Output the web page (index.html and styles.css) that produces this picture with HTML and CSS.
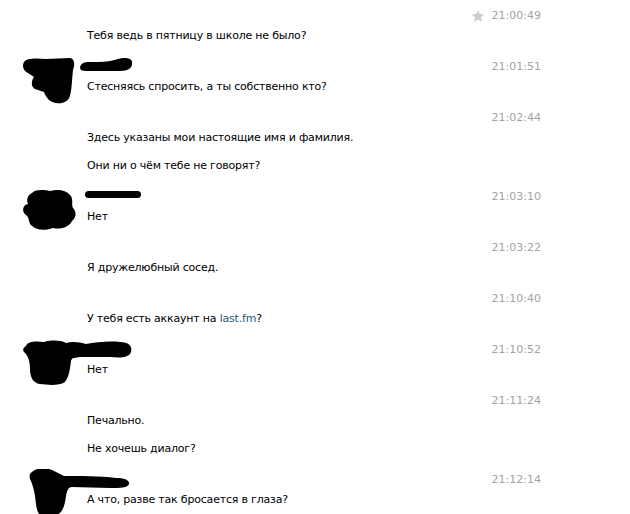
FILE: index.html
```html
<!DOCTYPE html>
<html lang="ru">
<head>
    <meta charset="UTF-8">
    <title>Диалог</title>
    <link rel="stylesheet" href="styles.css">
</head>
<body>
    <div class="dialog">
        <div class="msg">
            <div class="ava"></div>
            <div class="body">
                <div class="head"><span class="author"></span><span class="time"><svg class="star" width="14" height="14" viewBox="0 0 24 24"><path d="M12 1.5l3.2 7.1 7.6.7-5.8 5.1 1.8 7.6L12 18l-6.8 4 1.8-7.6L1.2 9.3l7.6-.7z"/></svg>21:00:49</span></div>
                <p>Тебя ведь в пятницу в школе не было?</p>
            </div>
        </div>

        <div class="msg">
            <svg class="censor" width="130" height="50" viewBox="0 0 130 50">
                <path d="M4 6 C6 2 16 2 26 3 L50 2 C55 3 55 9 53 14 C52 22 52 32 50 40 C48 46 42 48 36 47 C30 46 26 42 24 36 L15 33 C11 31 11 25 14 21 L8 17 C3 15 2 9 4 6 Z"/>
                <path d="M61 9 C63 5 70 6 78 6 C86 6 92 5 98 3 C104 1 112 2 112 6 C113 12 108 15 100 15 L66 15 C60 15 59 12 61 9 Z"/>
            </svg>
            <div class="ava"></div>
            <div class="body">
                <div class="head"><span class="author"></span><span class="time">21:01:51</span></div>
                <p>Стесняясь спросить, а ты собственно кто?</p>
            </div>
        </div>

        <div class="msg">
            <div class="ava"></div>
            <div class="body">
                <div class="head"><span class="author"></span><span class="time">21:02:44</span></div>
                <p>Здесь указаны мои настоящие имя и фамилия.</p>
                <p>Они ни о чём тебе не говорят?</p>
            </div>
        </div>

        <div class="msg">
            <svg class="censor" width="130" height="50" viewBox="0 0 130 50">
                <path d="M12 7 C16 3 24 4 30 5 C38 3 46 4 50 9 C54 13 51 18 53 22 C57 26 56 32 52 35 C49 41 41 44 33 42 C25 45 16 44 12 40 C8 37 10 32 6 29 C1 25 3 19 8 18 C6 13 8 9 12 7 Z"/>
                <rect x="65" y="5" width="56" height="7" rx="3.5"/>
            </svg>
            <div class="ava"></div>
            <div class="body">
                <div class="head"><span class="author"></span><span class="time">21:03:10</span></div>
                <p>Нет</p>
            </div>
        </div>

        <div class="msg">
            <div class="ava"></div>
            <div class="body">
                <div class="head"><span class="author"></span><span class="time">21:03:22</span></div>
                <p>Я дружелюбный сосед.</p>
            </div>
        </div>

        <div class="msg">
            <div class="ava"></div>
            <div class="body">
                <div class="head"><span class="author"></span><span class="time">21:10:40</span></div>
                <p>У тебя есть аккаунт на <a href="#">last.fm</a>?</p>
            </div>
        </div>

        <div class="msg">
            <svg class="censor" width="130" height="50" viewBox="0 0 130 50">
                <path d="M6 7 C8 2 16 2 24 3 C32 1 40 1 46 4 C52 2 60 3 66 5 C76 3 90 2 100 3 C108 3 113 7 111 13 C109 19 100 19 90 18 L60 18 C55 19 52 18 51 22 C50 30 49 38 45 43 C39 47 28 46 20 45 C13 44 10 38 10 30 C10 22 8 17 5 14 C2 11 3 9 6 7 Z"/>
            </svg>
            <div class="ava"></div>
            <div class="body">
                <div class="head"><span class="author"></span><span class="time">21:10:52</span></div>
                <p>Нет</p>
            </div>
        </div>

        <div class="msg">
            <div class="ava"></div>
            <div class="body">
                <div class="head"><span class="author"></span><span class="time">21:11:24</span></div>
                <p>Печально.</p>
                <p>Не хочешь диалог?</p>
            </div>
        </div>

        <div class="msg">
            <svg class="censor" width="130" height="50" viewBox="0 0 130 50">
                <path d="M12 3 C16 -1 26 -2 32 1 C36 3 40 5 44 7 C60 7 80 7 96 9 C104 9 110 11 109 15 C108 19 100 19 90 19 L52 18 C48 18 47 22 46 27 C45 34 44 40 40 44 C35 48 25 48 20 46 C16 42 16 34 15 27 C14 20 12 14 10 10 C9 6 10 4 12 3 Z"/>
            </svg>
            <div class="ava"></div>
            <div class="body">
                <div class="head"><span class="author"></span><span class="time">21:12:14</span></div>
                <p>А что, разве так бросается в глаза?</p>
            </div>
        </div>
    </div>
</body>
</html>
```

FILE: styles.css
```css
body {
    margin: 0;
    background: #fff;
    font-family: "DejaVu Sans", Tahoma, sans-serif;
    font-size: 11px;
    color: #000;
}

.dialog {
    padding: 5px 89px 0 20px;
}

.msg {
    position: relative;
    display: flex;
    padding-bottom: 10px;
}

.ava {
    width: 67px;
    flex-shrink: 0;
}

.body {
    flex: 1;
}

.head {
    display: flex;
    justify-content: space-between;
    height: 21px;
    line-height: 21px;
}

.time {
    display: flex;
    align-items: center;
    color: #a3a3a3;
}

.star {
    fill: #cdcdcd;
    margin-right: 7px;
}

.body p {
    margin: 0;
    line-height: 20px;
    letter-spacing: -0.2px;
}

.body p + p {
    margin-top: 8px;
}

.body a {
    color: #2b587a;
    text-decoration: none;
}

/* scribbled-over avatars and names */
.censor {
    position: absolute;
    left: 0;
    top: 0;
    fill: #000;
}
```
